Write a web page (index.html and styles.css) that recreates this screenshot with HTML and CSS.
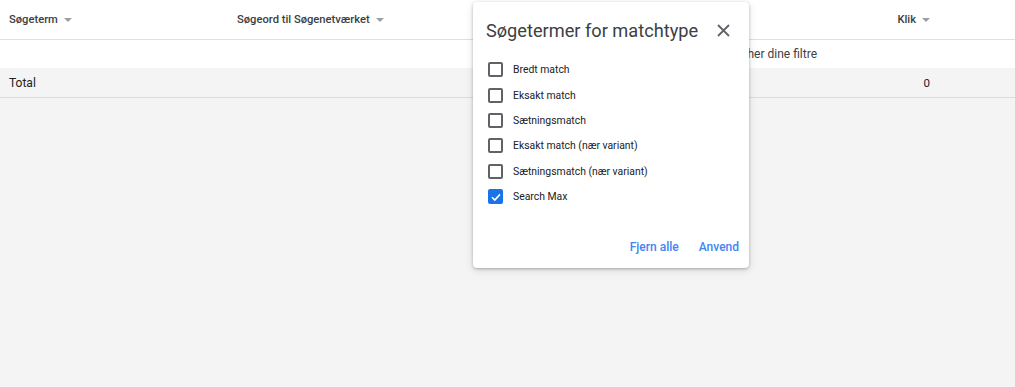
FILE: index.html
```html
<!DOCTYPE html>
<html lang="da">
<head>
    <meta charset="UTF-8">
    <meta name="viewport" content="width=device-width, initial-scale=1.0">
    <title>Søgetermer</title>
    <link rel="stylesheet" href="styles.css">
</head>
<body>
    <div class="report">
        <div class="row header-row">
            <div class="cell col-term">Søgeterm <span class="sort-arrow"></span></div>
            <div class="cell col-keyword">Søgeord til Søgenetværket <span class="sort-arrow"></span></div>
            <div class="cell col-clicks">Klik <span class="sort-arrow"></span></div>
        </div>
        <div class="row empty-row">
            <div class="empty-message">Ingen rækker matcher dine filtre</div>
        </div>
        <div class="row total-row">
            <div class="cell col-term">Total</div>
            <div class="cell col-keyword"></div>
            <div class="cell col-clicks">0</div>
        </div>
    </div>

    <div class="dialog">
        <div class="dialog-header">
            <h2 class="dialog-title">Søgetermer for matchtype</h2>
            <button class="close-button" aria-label="Luk">
                <svg width="13" height="13" viewBox="0 0 13 13">
                    <path d="M1 1 L12 12 M12 1 L1 12" stroke="#5f6368" stroke-width="1.8" fill="none"/>
                </svg>
            </button>
        </div>
        <ul class="option-list">
            <li class="option"><span class="checkbox"></span>Bredt match</li>
            <li class="option"><span class="checkbox"></span>Eksakt match</li>
            <li class="option"><span class="checkbox"></span>Sætningsmatch</li>
            <li class="option"><span class="checkbox"></span>Eksakt match (nær variant)</li>
            <li class="option"><span class="checkbox"></span>Sætningsmatch (nær variant)</li>
            <li class="option">
                <span class="checkbox checked">
                    <svg width="10" height="10" viewBox="0 0 10 10">
                        <path d="M1 5.2 L3.8 8 L9 2.4" stroke="#fff" stroke-width="1.6" fill="none"/>
                    </svg>
                </span>Search Max
            </li>
        </ul>
        <div class="dialog-actions">
            <button class="text-button">Fjern alle</button>
            <button class="text-button">Anvend</button>
        </div>
    </div>
</body>
</html>
```

FILE: styles.css
```css
body {
    margin: 0;
    font-family: Roboto, "Liberation Sans", Arial, sans-serif;
    background: #f4f4f4;
    height: 387px;
    overflow: hidden;
    position: relative;
}
.report {
    background: #fff;
}
.row {
    display: flex;
    align-items: center;
    font-size: 12px;
    color: #3c4043;
}
.header-row {
    height: 39px;
    border-bottom: 1px solid #e0e0e0;
    font-size: 11.2px;
    font-weight: 500;
}
.empty-row {
    height: 28px;
}
.empty-message {
    margin-left: auto;
    margin-right: 198px;
    color: #3c4043;
}
.total-row {
    height: 29px;
    background: #f4f4f4;
    border-bottom: 1px solid #dadce0;
    color: #202124;
}
.cell {
    display: flex;
    align-items: center;
    gap: 6px;
}
.col-term {
    width: 228px;
    padding-left: 9px;
}
.col-keyword {
    flex: 1;
}
.col-clicks {
    width: 120px;
    justify-content: flex-end;
    padding-right: 85px;
}
.total-row .col-clicks {
    font-size: 11.5px;
}
.sort-arrow {
    width: 0;
    height: 0;
    border-left: 4px solid transparent;
    border-right: 4px solid transparent;
    border-top: 4px solid #9aa0a6;
    margin-top: 1px;
}
.dialog {
    position: absolute;
    left: 473px;
    top: 2px;
    width: 276px;
    height: 266px;
    background: #fff;
    border-radius: 4px;
    box-shadow: 0 1px 3px rgba(0,0,0,0.25), 0 2px 8px rgba(0,0,0,0.12);
    box-sizing: border-box;
    display: flex;
    flex-direction: column;
}
.dialog-header {
    display: flex;
    align-items: center;
    justify-content: space-between;
    padding: 14px 19px 0 13px;
    height: 28px;
}
.dialog-title {
    margin: 0;
    font-size: 18.2px;
    font-weight: 400;
    color: #3c4043;
}
.close-button {
    border: none;
    background: none;
    padding: 0;
    display: flex;
    cursor: pointer;
}
.option-list {
    list-style: none;
    margin: 0;
    padding: 13px 0 0 15px;
}
.option {
    display: flex;
    align-items: center;
    gap: 10px;
    height: 25.4px;
    font-size: 10.4px;
    color: #202124;
}
.checkbox {
    width: 11px;
    height: 11px;
    border: 2px solid #5f6368;
    border-radius: 2px;
    display: flex;
    align-items: center;
    justify-content: center;
}
.checkbox.checked {
    background: #1a73e8;
    border-color: #1a73e8;
}
.dialog-actions {
    margin-top: auto;
    display: flex;
    justify-content: flex-end;
    gap: 20px;
    padding: 0 10px 14px 0;
}
.text-button {
    border: none;
    background: none;
    padding: 0;
    font-family: inherit;
    font-size: 12px;
    font-weight: 500;
    color: #4285f4;
    cursor: pointer;
}
```
